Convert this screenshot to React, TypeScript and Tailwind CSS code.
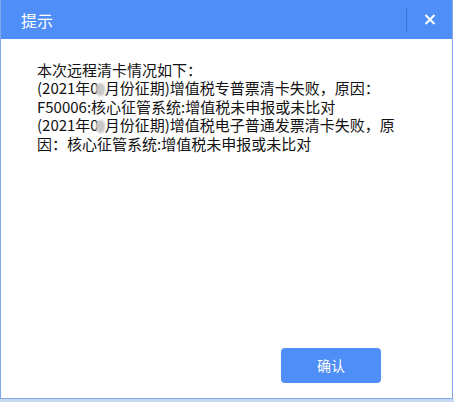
export default function App() {
  const font = { fontFamily: '"Microsoft YaHei", "Noto Sans CJK SC", "Liberation Sans", sans-serif' };
  const blur = <span className="inline-block h-[13px] w-[9px] -ml-[3px] rounded-full bg-[#c8c8c8] blur-[1px] align-[-2px]" />;

  return (
    <div className="relative h-[402px] w-[454px] overflow-hidden bg-white" style={font}>
      <div className="flex h-[399px] w-[453px] flex-col border-x border-b border-[#7fa7ec] bg-white">
        <div className="flex h-[39px] shrink-0 items-center bg-[#4f8ef6] pl-[20px]">
          <span className="text-[16px] text-white">提示</span>
          <div className="ml-auto flex h-full items-center">
            <div className="h-[24px] w-px bg-[#3c74d4]" />
            <div className="flex w-[45px] items-center justify-center">
              <svg width="12" height="11" viewBox="0 0 12 11" fill="none">
                <path d="M1.5 1 L10.5 10 M10.5 1 L1.5 10" stroke="white" strokeWidth="2" />
              </svg>
            </div>
          </div>
        </div>
        <div className="flex-1 whitespace-nowrap pl-[36px] pt-[22px] text-[15px] leading-[18.4px] text-[#111]">
          <div>本次远程清卡情况如下：</div>
          <div>(2021年0{blur}月份征期)增值税专普票清卡失败，原因：</div>
          <div>F50006:核心征管系统:增值税未申报或未比对</div>
          <div>(2021年0{blur}月份征期)增值税电子普通发票清卡失败，原</div>
          <div>因：核心征管系统:增值税未申报或未比对</div>
        </div>
        <div className="flex justify-end pb-[15px] pr-[71px]">
          <button className="flex h-[35px] w-[100px] items-center justify-center rounded-[4px] bg-[#4f8ef6] text-[14px] text-white">
            确认
          </button>
        </div>
      </div>
      <div className="h-[3px] w-full bg-[#c9d9f3]" />
    </div>
  );
}
